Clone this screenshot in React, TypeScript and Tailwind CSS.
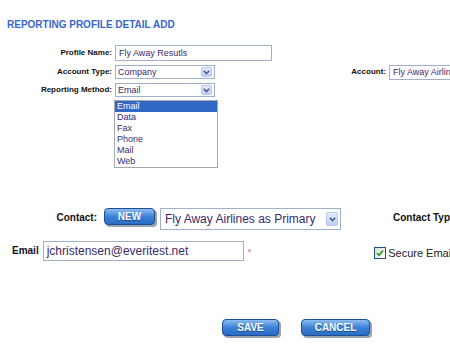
import React from "react";

function Chevron({ w, h }: { w: number; h: number }) {
  return (
    <div
      className="flex items-center justify-center rounded-[2px] border border-[#b7c9ef] bg-gradient-to-b from-[#e4ecfd] to-[#b9cff7] shrink-0"
      style={{ width: w, height: h }}
    >
      <svg width="7" height="5" viewBox="0 0 7 5">
        <path d="M0.8 0.8 L3.5 3.6 L6.2 0.8" fill="none" stroke="#4a5f8a" strokeWidth="1.6" />
      </svg>
    </div>
  );
}

function BlueButton({ label, w, h }: { label: string; w: number; h: number }) {
  return (
    <div className="relative shrink-0" style={{ width: w + 2, height: h + 2 }}>
      <div
        className="absolute left-[2px] top-[2px] rounded-[4px] bg-[#9aa3ad]"
        style={{ width: w, height: h }}
      />
      <div
        className="absolute left-0 top-0 flex items-center justify-center rounded-[4px] border border-[#1d4f97] bg-gradient-to-b from-[#8cbcf0] via-[#3b82d6] to-[#2a6cc4] text-[10px] font-bold text-white leading-none [text-shadow:0_1px_0_#1b4a8c]"
        style={{ width: w, height: h }}
      >
        {label}
      </div>
    </div>
  );
}

export default function App() {
  const items = ["Email", "Data", "Fax", "Phone", "Mail", "Web"];
  return (
    <div className="relative w-[450px] h-[350px] overflow-hidden bg-white font-['Liberation_Sans',Arial,sans-serif] text-[#111]">
      <div className="pt-[19px] pl-[7px] text-[10px] leading-[12px] font-bold text-[#3867cc] whitespace-nowrap">
        REPORTING PROFILE DETAIL ADD
      </div>

      {/* Row 1 */}
      <div className="mt-[14px] flex items-center h-[16px]">
        <div className="w-[112px] text-right text-[8px] font-bold leading-none shrink-0">Profile Name:</div>
        <div className="ml-[3px] w-[157px] h-[16px] border border-[#9fb0c8] flex items-center pl-[3px] text-[9px] text-[#3b2a6b] leading-none whitespace-nowrap">
          Fly Away Resutls
        </div>
      </div>

      {/* Row 2 */}
      <div className="mt-[4px] flex items-center h-[14px] whitespace-nowrap">
        <div className="w-[112px] text-right text-[8px] font-bold leading-none shrink-0">Account Type:</div>
        <div className="ml-[3px] w-[100px] h-[14px] border border-[#9fb0c8] flex items-center justify-between pl-[2px] pr-[2px] text-[9px] text-[#3b2a6b] leading-none shrink-0">
          <span>Company</span>
          <Chevron w={11} h={10} />
        </div>
        <div className="w-[171px] text-right text-[8px] font-bold leading-none shrink-0">Account:</div>
        <div className="ml-[3px] w-[120px] h-[15px] border border-[#9fb0c8] flex items-center pl-[3px] text-[9px] text-[#3b2a6b] leading-none shrink-0">
          Fly Away Airlines
        </div>
      </div>

      {/* Row 3 */}
      <div className="relative mt-[4px] flex items-center h-[14px] whitespace-nowrap">
        <div className="w-[112px] text-right text-[8px] font-bold leading-none shrink-0">Reporting Method:</div>
        <div className="ml-[3px] w-[100px] h-[14px] border border-[#9fb0c8] flex items-center justify-between pl-[2px] pr-[2px] text-[9px] text-[#3b2a6b] leading-none shrink-0">
          <span>Email</span>
          <Chevron w={11} h={10} />
        </div>
        <div className="absolute left-[114px] top-[17px] w-[104px] h-[68px] border border-[#a8a8a8] bg-white flex flex-col z-10">
          {items.map((it, i) => (
            <div
              key={it}
              className={
                i === 0
                  ? "h-[11px] pl-[2px] flex items-center text-[9px] leading-none bg-[#3168c6] text-white"
                  : "h-[11px] pl-[2px] flex items-center text-[9px] leading-none text-[#3b2a6b]"
              }
            >
              {it}
            </div>
          ))}
        </div>
      </div>

      {/* Contact row */}
      <div className="mt-[111px] flex items-start h-[22px] whitespace-nowrap">
        <div className="w-[97px] h-[20px] flex items-center justify-end text-[10px] font-bold leading-none shrink-0">Contact:</div>
        <div className="ml-[7px]">
          <BlueButton label="NEW" w={51} h={17} />
        </div>
        <div className="ml-[3px] w-[181px] h-[22px] border border-[#9fb0c8] flex items-center justify-between pl-[4px] pr-[2px] text-[12px] text-[#3b2a6b] leading-none shrink-0">
          <span>Fly Away Airlines as Primary</span>
          <Chevron w={12} h={14} />
        </div>
        <div className="ml-[52px] h-[20px] flex items-center text-[10px] font-bold leading-none shrink-0">Contact Type:</div>
      </div>

      {/* Email row */}
      <div className="mt-[11px] flex items-center h-[20px] pl-[12px] whitespace-nowrap">
        <div className="text-[10px] font-bold leading-none shrink-0">Email</div>
        <div className="ml-[4px] w-[201px] h-[20px] border border-[#9fb0c8] flex items-center pl-[3px] text-[12px] text-[#3b2a6b] leading-none shrink-0">
          jchristensen@everitest.net
        </div>
        <div className="ml-[4px] text-[9px] text-[#ee5577] leading-none shrink-0 mt-[2px]">*</div>
        <div className="ml-[123px] w-[12px] h-[12px] border border-[#1c5180] bg-gradient-to-br from-[#dcdcd6] to-white flex items-center justify-center shrink-0 mt-[4px]">
          <svg width="8" height="8" viewBox="0 0 8 8">
            <path d="M1 4 L3 6.2 L7 1.5" fill="none" stroke="#21a121" strokeWidth="1.7" />
          </svg>
        </div>
        <div className="ml-[2px] text-[11px] leading-none shrink-0 mt-[4px] text-[#222]">Secure Email</div>
      </div>

      {/* Buttons */}
      <div className="mt-[58px] flex pl-[222px]">
        <BlueButton label="SAVE" w={57} h={17} />
        <div className="ml-[20px]">
          <BlueButton label="CANCEL" w={69} h={17} />
        </div>
      </div>
    </div>
  );
}
